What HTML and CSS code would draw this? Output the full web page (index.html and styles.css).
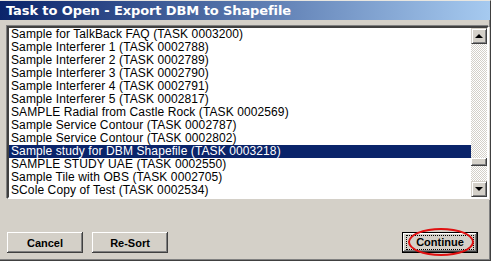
FILE: index.html
```html
<!DOCTYPE html>
<html lang="en">
  <head>
    <title>Task to Open - Export DBM to Shapefile</title>
    <meta charset="utf-8" />
    <link rel="stylesheet" href="styles.css">
  </head>

  <body>
    <div class="window">
      <div class="titlebar">Task to Open - Export DBM to Shapefile</div>
      <div class="content">
        <div class="listbox">
          <ul class="items">
            <li>Sample for TalkBack FAQ (TASK 0003200)</li>
            <li>Sample Interferer 1 (TASK 0002788)</li>
            <li>Sample Interferer 2 (TASK 0002789)</li>
            <li>Sample Interferer 3 (TASK 0002790)</li>
            <li>Sample Interferer 4 (TASK 0002791)</li>
            <li>Sample Interferer 5 (TASK 0002817)</li>
            <li>SAMPLE Radial from Castle Rock (TASK 0002569)</li>
            <li>Sample Service Contour (TASK 0002787)</li>
            <li>Sample Service Contour (TASK 0002802)</li>
            <li class="selected">Sample study for DBM Shapefile (TASK 0003218)</li>
            <li>SAMPLE STUDY UAE (TASK 0002550)</li>
            <li>Sample Tile with OBS (TASK 0002705)</li>
            <li>SCole Copy of Test (TASK 0002534)</li>
          </ul>
          <div class="scrollbar">
            <div class="sb-btn"><span class="arrow up"></span></div>
            <div class="track">
              <div class="thumb"></div>
            </div>
            <div class="sb-btn"><span class="arrow down"></span></div>
          </div>
        </div>
        <div class="buttons">
          <button type="button">Cancel</button>
          <button type="button">Re-Sort</button>
          <span class="spacer"></span>
          <button type="button" class="default"><span class="focus">Continue</span></button>
          <span class="circle"></span>
        </div>
      </div>
    </div>
  </body>
</html>
```
FILE: styles.css
```css
body {
  margin: 0;
  background: #d4d0c8;
  font-family: "Liberation Sans", Arial, sans-serif;
  font-size: 12px;
}

.window {
  position: relative;
  width: 491px;
  height: 261px;
  box-sizing: border-box;
  background: #d4d0c8;
  border-top: 1px solid #e8e6e0;
  border-right: 1px solid #404040;
  border-bottom: 1px solid #404040;
  box-shadow: inset -1px -1px 0 #808080;
  display: flex;
  flex-direction: column;
}

.titlebar {
  height: 19px;
  line-height: 19px;
  padding-left: 6px;
  color: #fff;
  font-family: "DejaVu Sans", Verdana, sans-serif;
  font-weight: bold;
  font-size: 13px;
  letter-spacing: -0.1px;
  background: linear-gradient(to right, #0a246a, #a6caf0);
}

.content {
  padding: 6px 1px 0 7px;
  flex: 1;
  display: flex;
  flex-direction: column;
}

.listbox {
  display: flex;
  height: 169px;
  background: #fff;
  border-top: 2px solid #404040;
  border-left: 2px solid #404040;
  border-bottom: 2px solid #fff;
  border-right: 2px solid #fff;
  box-shadow: -1px -1px 0 #808080, 1px 1px 0 #d4d0c8;
}

.items {
  flex: 1;
  list-style: none;
  margin: 0;
  padding: 0;
}

.items li {
  height: 13px;
  line-height: 13px;
  padding-left: 2px;
  color: #000;
  white-space: nowrap;
  letter-spacing: 0.1px;
}

.items li.selected {
  background: #0a246a;
  color: #fff;
}

.scrollbar {
  width: 16px;
  display: flex;
  flex-direction: column;
}

.sb-btn {
  height: 16px;
  box-sizing: border-box;
  background: #d4d0c8;
  border-top: 1px solid #d4d0c8;
  border-left: 1px solid #d4d0c8;
  border-right: 1px solid #404040;
  border-bottom: 1px solid #404040;
  box-shadow: inset 1px 1px 0 #fff, inset -1px -1px 0 #808080;
  display: flex;
  align-items: center;
  justify-content: center;
}

.arrow {
  width: 0;
  height: 0;
  border-left: 4px solid transparent;
  border-right: 4px solid transparent;
}

.arrow.up {
  border-bottom: 4px solid #000;
}

.arrow.down {
  border-top: 4px solid #000;
}

.track {
  flex: 1;
  background: repeating-conic-gradient(#d4d0c8 0 25%, #fff 0 50%) 0 0 / 2px 2px;
  padding-top: 114px;
}

.thumb {
  height: 8px;
  box-sizing: border-box;
  background: #d4d0c8;
  border-right: 1px solid #404040;
  border-bottom: 1px solid #404040;
  box-shadow: inset 1px 1px 0 #fff, inset -1px -1px 0 #808080;
}

.buttons {
  display: flex;
  gap: 9px;
  margin-top: 33px;
  padding-right: 11px;
}

.spacer {
  flex: 1;
}

button {
  width: 76px;
  height: 21px;
  padding: 0;
  font-family: "Liberation Sans", Arial, sans-serif;
  font-size: 11px;
  font-weight: bold;
  color: #000;
  background: #d4d0c8;
  border: none;
  box-shadow: inset -1px -1px 0 #404040, inset 1px 1px 0 #fff, inset -2px -2px 0 #808080;
}

button.default {
  border: 1px solid #000;
  display: flex;
  align-items: center;
  justify-content: center;
}

.focus {
  display: block;
  width: 66px;
  height: 13px;
  line-height: 13px;
  border: 1px dotted #000;
}

.circle {
  position: absolute;
  left: 408px;
  top: 227px;
  width: 62px;
  height: 24px;
  border: 2px solid #e01010;
  border-radius: 50%;
}
```
